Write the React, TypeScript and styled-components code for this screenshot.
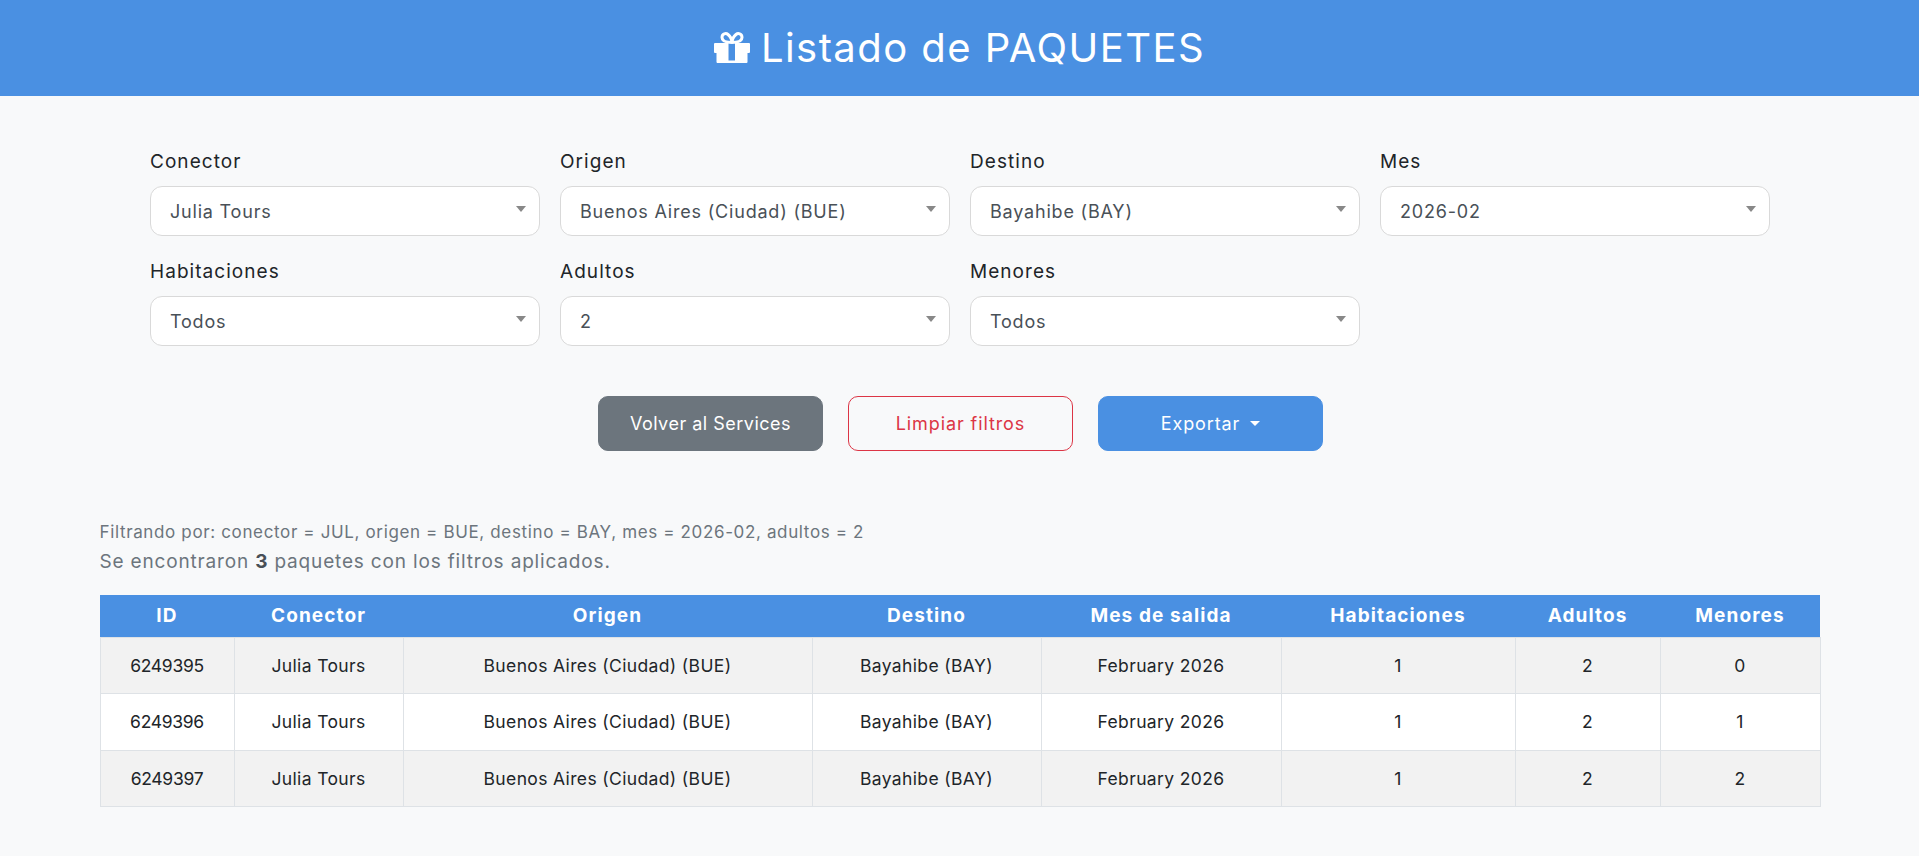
import React from "react";
import styled, { createGlobalStyle } from "styled-components";

const FONT = `"Inter", "Noto Sans", "Liberation Sans", sans-serif`;

const Global = createGlobalStyle`
  html, body { margin: 0; padding: 0; background: #f8f9fa; }
  body { font-family: ${FONT}; color: #212529; min-height: 856px; overflow: hidden; }
  * { box-sizing: border-box; }
`;

const Header = styled.header`
  height: 96px;
  background: #4a90e2;
  color: #fff;
  display: flex;
  align-items: center;
  justify-content: center;
`;
const Title = styled.h1`
  margin: 0;
  font-size: 40px;
  font-weight: 400;
  line-height: 1;
  letter-spacing: 1.45px;
  display: flex;
  align-items: center;
  gap: 11px;
  svg { width: 36px; height: 31px; margin-top: -1px; }
`;

const Filters = styled.section`
  width: 1620px;
  margin: 53px 0 0 150px;
  display: grid;
  grid-template-columns: repeat(4, 390px);
  column-gap: 20px;
`;
const Field = styled.div`
  height: 110px;
  display: flex;
  flex-direction: column;
`;
const Label = styled.label`
  font-size: 19px;
  line-height: 24px;
  height: 37px;
  padding-top: 1px;
  color: #212529;
  letter-spacing: 1.05px;
`;
const SelectWrap = styled.div`
  position: relative;
  height: 50px;
  &::after {
    content: "";
    position: absolute;
    right: 14px;
    top: 20px;
    border-left: 5px solid transparent;
    border-right: 5px solid transparent;
    border-top: 6px solid #888;
    pointer-events: none;
  }
`;
const Select = styled.select`
  appearance: none;
  width: 100%;
  height: 50px;
  padding: 0 19px;
  font: 400 18px ${FONT};
  letter-spacing: 0.8px;
  color: #495057;
  background: #fff;
  border: 1px solid #d9d9d9;
  border-radius: 12px;
`;

const Actions = styled.div`
  display: flex;
  justify-content: center;
  gap: 25px;
  margin-top: 27px;
  padding-left: 2px;
`;
const Button = styled.button<{ $kind: "gray" | "red" | "blue" }>`
  width: 225px;
  height: 55px;
  display: inline-flex;
  align-items: center;
  justify-content: center;
  gap: 10px;
  font: 400 18px ${FONT};
  letter-spacing: ${(p) => (p.$kind === "gray" ? "0.5px" : "0.9px")};
  border-radius: 10px;
  border: 1px solid ${(p) => (p.$kind === "gray" ? "#6c757d" : p.$kind === "red" ? "#dc3545" : "#4a90e2")};
  background: ${(p) => (p.$kind === "gray" ? "#6c757d" : p.$kind === "red" ? "transparent" : "#4a90e2")};
  color: ${(p) => (p.$kind === "red" ? "#dc3545" : "#fff")};
`;
const Caret = styled.span`
  width: 0;
  height: 0;
  border-left: 5px solid transparent;
  border-right: 5px solid transparent;
  border-top: 5px solid currentColor;
`;

const Results = styled.section`
  width: 1720px;
  margin: 68px auto 0;
`;
const FilterNote = styled.div`
  font-size: 17px;
  line-height: 26px;
  letter-spacing: 0.64px;
  color: #6c757d;
`;
const Count = styled.div`
  font-size: 19px;
  line-height: 34px;
  letter-spacing: 0.83px;
  color: #6c757d;
  strong { color: #495057; }
`;
const Table = styled.table`
  margin-top: 16px;
  width: 1720px;
  table-layout: fixed;
  border-collapse: collapse;
`;
const Th = styled.th`
  height: 42px;
  padding: 0;
  background: #4a90e2;
  color: #fff;
  font-size: 19px;
  font-weight: 700;
  letter-spacing: 1.1px;
  text-align: center;
`;
const Row = styled.tr<{ $odd: boolean }>`
  background: ${(p) => (p.$odd ? "#f2f2f2" : "#fff")};
`;
const Td = styled.td<{ $tight?: boolean }>`
  height: 56.6px;
  padding: 0;
  border: 1px solid #dee2e6;
  font-size: 17.5px;
  letter-spacing: ${(p) => (p.$tight ? "-0.3px" : "0.36px")};
  color: #212529;
  text-align: center;
`;

const GiftIcon = () => (
  <svg viewBox="0 0 36 31" aria-hidden="true">
    <path
      fill="#fff"
      fillRule="evenodd"
      d="M1 11h34a1 1 0 0 1 1 1v8a1 1 0 0 1-1 1h-1.500v9a1 1 0 0 1-1 1h-29a1 1 0 0 1-1-1v-9H1a1 1 0 0 1-1-1v-8a1 1 0 0 1 1-1zM14.500 11v17.500h6.500V11z"
    />
    <path
      fill="none"
      stroke="#fff"
      strokeWidth="3"
      d="M18 10.500C14 10.500 8 10 8 5.500C8 1.500 12 0.800 14 2.500C16 4.200 18 8 18 10.500C18 8 20 4.200 22 2.500C24 0.800 28 1.500 28 5.500C28 10 22 10.500 18 10.500Z"
    />
  </svg>
);

const filters = [
  ["Conector", "Julia Tours"],
  ["Origen", "Buenos Aires (Ciudad) (BUE)"],
  ["Destino", "Bayahibe (BAY)"],
  ["Mes", "2026-02"],
  ["Habitaciones", "Todos"],
  ["Adultos", "2"],
  ["Menores", "Todos"],
];
const columns: [string, number][] = [
  ["ID", 134], ["Conector", 169], ["Origen", 409], ["Destino", 229],
  ["Mes de salida", 240], ["Habitaciones", 234], ["Adultos", 145], ["Menores", 160],
];
const rows = [
  ["6249395", "0"],
  ["6249396", "1"],
  ["6249397", "2"],
];

export default function App() {
  return (
    <>
      <Global />
      <Header>
        <Title><GiftIcon /> Listado de PAQUETES</Title>
      </Header>
      <Filters>
        {filters.map(([label, value]) => (
          <Field key={label}>
            <Label>{label}</Label>
            <SelectWrap>
              <Select defaultValue={value}><option>{value}</option></Select>
            </SelectWrap>
          </Field>
        ))}
      </Filters>
      <Actions>
        <Button $kind="gray">Volver al Services</Button>
        <Button $kind="red">Limpiar filtros</Button>
        <Button $kind="blue">Exportar <Caret /></Button>
      </Actions>
      <Results>
        <FilterNote>Filtrando por: conector = JUL, origen = BUE, destino = BAY, mes = 2026-02, adultos = 2</FilterNote>
        <Count>Se encontraron <strong>3</strong> paquetes con los filtros aplicados.</Count>
        <Table>
          <colgroup>
            {columns.map(([name, w]) => <col key={name} style={{ width: w }} />)}
          </colgroup>
          <thead>
            <tr>{columns.map(([name]) => <Th key={name}>{name}</Th>)}</tr>
          </thead>
          <tbody>
            {rows.map(([id, minors], i) => (
              <Row key={id} $odd={i % 2 === 0}>
                <Td $tight>{id}</Td>
                <Td>Julia Tours</Td>
                <Td>Buenos Aires (Ciudad) (BUE)</Td>
                <Td>Bayahibe (BAY)</Td>
                <Td>February 2026</Td>
                <Td>1</Td>
                <Td>2</Td>
                <Td>{minors}</Td>
              </Row>
            ))}
          </tbody>
        </Table>
      </Results>
    </>
  );
}
